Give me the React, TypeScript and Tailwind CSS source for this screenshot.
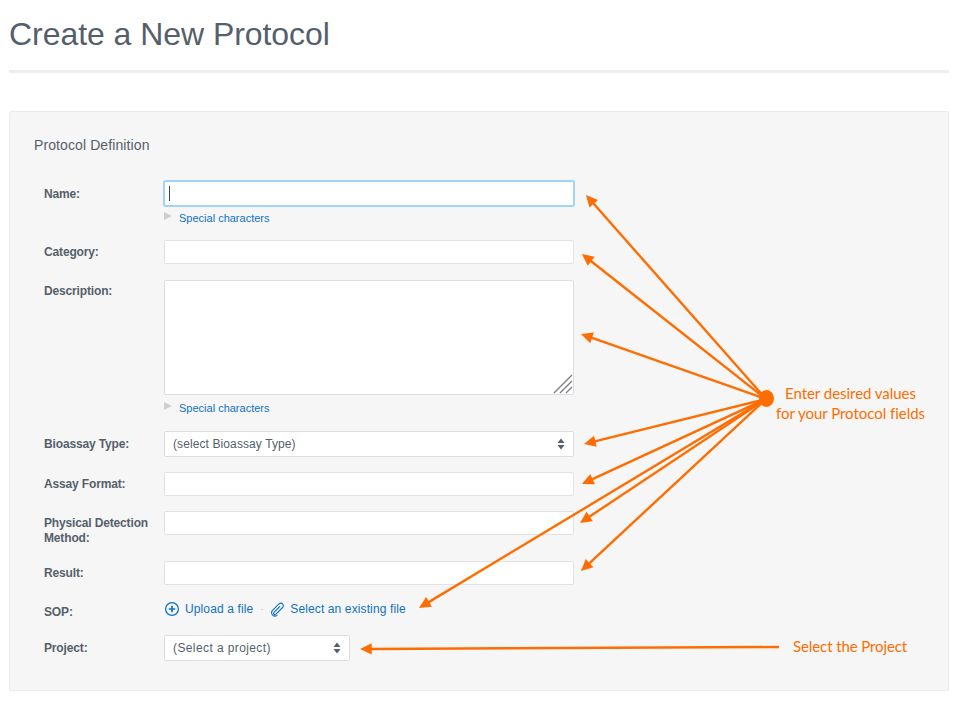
const labelClass = "w-[120px] shrink-0 text-[12px] leading-[15px] font-bold tracking-[-0.15px] text-[#555f6b]";
const inputClass = "w-[410px] h-[24px] bg-white border border-[#e2e2e2] rounded-[2px]";

const arrowTargets = [
  [586, 195],
  [582, 254],
  [581, 334],
  [584, 444],
  [582, 484],
  [580, 523],
  [581, 571],
  [419, 608],
];

function Arrow({ x1, y1, x2, y2 }: { x1: number; y1: number; x2: number; y2: number }) {
  const angle = Math.atan2(y1 - y2, x1 - x2);
  const len = 13;
  const spread = 0.45;
  const ax = x2 + Math.cos(angle + spread) * len;
  const ay = y2 + Math.sin(angle + spread) * len;
  const bx = x2 + Math.cos(angle - spread) * len;
  const by = y2 + Math.sin(angle - spread) * len;
  return (
    <g>
      <line x1={x1} y1={y1} x2={x2 + Math.cos(angle) * 8} y2={y2 + Math.sin(angle) * 8} stroke="#ff6d00" strokeWidth="2.4" />
      <polygon points={`${x2},${y2} ${ax},${ay} ${bx},${by}`} fill="#ff6d00" />
    </g>
  );
}

function Stepper() {
  return (
    <svg width="8" height="12" viewBox="0 0 8 12" className="shrink-0">
      <path d="M4 0.5 L7.5 5 H0.5 Z M0.5 7 H7.5 L4 11.5 Z" fill="#555f6b" />
    </svg>
  );
}

function SpecialChars() {
  return (
    <div className="flex items-start ml-[120px] h-[14px]">
      <svg width="8" height="8" viewBox="0 0 8 8" className="mt-[1px]">
        <path d="M0 0 L8 4 L0 8 Z" fill="#cfcfcf" />
      </svg>
      <a className="ml-[7px] text-[11px] leading-[15px] text-[#0f72c4]">Special characters</a>
    </div>
  );
}

export default function App() {
  return (
    <div className="relative w-[966px] h-[714px] bg-white font-['Liberation_Sans',sans-serif] overflow-hidden">
      <div className="px-[9px]">
        <h1 className="pt-[15px] h-[70px] text-[32px] leading-[38px] tracking-[-0.05px] text-[#555f6b]">Create a New Protocol</h1>
        <div className="h-[3px] w-[940px] bg-[#eeeeee]" />

        <div className="mt-[38px] w-[940px] h-[580px] bg-[#f6f6f6] border border-[#ebebeb] rounded-[2px] pl-[34px] pt-[25px]">
          <h2 className="text-[14px] leading-[17px] tracking-[0.1px] text-[#555f6b] -ml-[10px]">Protocol Definition</h2>

          <div className="mt-[26px] flex">
            <label className={`${labelClass} pt-[7px]`}>Name:</label>
            <div className="w-[412px] h-[27px] -ml-[1px] bg-white border-2 border-[#9fd3fb] rounded-[3px] flex items-center pl-[4px]">
              <div className="w-px h-[15px] bg-[#444444]" />
            </div>
          </div>
          <div className="mt-[4px]"><SpecialChars /></div>

          <div className="mt-[15px] flex">
            <label className={`${labelClass} pt-[5px]`}>Category:</label>
            <div className={inputClass} />
          </div>

          <div className="mt-[16px] flex">
            <label className={`${labelClass} pt-[4px]`}>Description:</label>
            <div className="relative w-[410px] h-[115px] bg-white border border-[#dddddd] rounded-[2px]">
              <svg width="20" height="20" viewBox="0 0 20 20" className="absolute right-0 bottom-0">
                <path d="M1 19 L19 1 M7 19 L19 7 M13 19 L19 13" stroke="#7b7f85" strokeWidth="1.4" fill="none" />
              </svg>
            </div>
          </div>
          <div className="mt-[6px]"><SpecialChars /></div>

          <div className="mt-[16px] flex">
            <label className={`${labelClass} pt-[6px]`}>Bioassay Type:</label>
            <div className="w-[410px] h-[26px] bg-white border border-[#dddddd] rounded-[2px] flex items-center justify-between pl-[8px] pr-[8px]">
              <span className="text-[12px] tracking-[0.1px] text-[#555f6b]">(select Bioassay Type)</span>
              <Stepper />
            </div>
          </div>

          <div className="mt-[15px] flex">
            <label className={`${labelClass} pt-[5px]`}>Assay Format:</label>
            <div className={inputClass} />
          </div>

          <div className="mt-[15px] flex">
            <label className={`${labelClass} pt-[5px]`}>Physical Detection Method:</label>
            <div className={inputClass} />
          </div>

          <div className="mt-[15px] flex">
            <label className={`${labelClass} pt-[5px]`}>Result:</label>
            <div className={inputClass} />
          </div>

          <div className="mt-[14px] flex items-start">
            <label className={`${labelClass} pt-[6px]`}>SOP:</label>
            <div className="mt-[1px] flex items-center h-[18px] text-[12px] tracking-[0.12px] text-[#0f72c4]">
              <svg width="16" height="16" viewBox="0 0 16 16">
                <circle cx="8" cy="8" r="6.4" stroke="#0f72c4" strokeWidth="1.3" fill="none" />
                <path d="M8 4.8 V11.2 M4.8 8 H11.2" stroke="#0f72c4" strokeWidth="1.7" />
              </svg>
              <a className="ml-[5px]">Upload a file</a>
              <span className="ml-[8px] w-[2px] h-px bg-[#d5d5d5]" />
              <svg width="15" height="15" viewBox="0 0 15 15" className="ml-[7px]" fill="none" stroke="#0f72c4" strokeWidth="1.1" strokeLinecap="round" strokeLinejoin="round">
                <path d="M9.8 4.6 L4 10.4 A1.3 1.3 0 0 0 5.9 12.2 L12.6 5.5 A2.5 2.5 0 0 0 9 1.9 L2.3 8.6 A3.4 3.4 0 0 0 7 13.4" />
              </svg>
              <a className="ml-[5px]">Select an existing file</a>
            </div>
          </div>

          <div className="mt-[15px] flex">
            <label className={`${labelClass} pt-[6px]`}>Project:</label>
            <div className="w-[186px] h-[26px] bg-white border border-[#dddddd] rounded-[2px] flex items-center justify-between pl-[8px] pr-[8px]">
              <span className="text-[12px] tracking-[0.4px] text-[#555f6b]">(Select a project)</span>
              <Stepper />
            </div>
          </div>
        </div>
      </div>

      {/* annotations drawn over the form */}
      <svg width="966" height="714" viewBox="0 0 966 714" className="absolute left-0 top-0 pointer-events-none">
        {arrowTargets.map(([x, y]) => (
          <Arrow key={`${x}-${y}`} x1={766} y1={399} x2={x} y2={y} />
        ))}
        <Arrow x1={779} y1={647} x2={360} y2={649} />
        <ellipse cx="766.5" cy="398.5" rx="7.5" ry="8.5" fill="#ff6d00" />
      </svg>
      <div className="absolute left-[760px] top-[383px] w-[181px] text-center text-[15px] leading-[20px] tracking-[-0.04px] text-[#ff6d00] font-['Lato',sans-serif]">
        Enter desired values
        <br />
        for your Protocol fields
      </div>
      <div className="absolute left-[793px] top-[636px] text-[15px] leading-[20px] tracking-[-0.1px] text-[#ff6d00] font-['Lato',sans-serif]">
        Select the Project
      </div>
    </div>
  );
}
